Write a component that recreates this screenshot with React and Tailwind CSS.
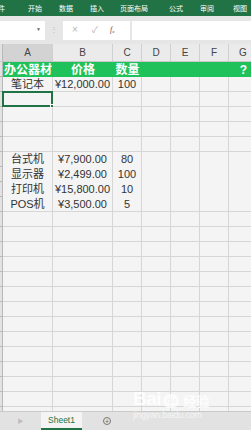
import React from 'react';

const cols = ['A', 'B', 'C', 'D', 'E', 'F', 'G'];
const widths = ['w-[50px]', 'w-[60px]', 'w-[29px]', 'w-[29px]', 'w-[29px]', 'w-[29px]', 'w-[29px]'];

const data = [
  ['台式机', '¥7,900.00', '80'],
  ['显示器', '¥2,499.00', '100'],
  ['打印机', '¥15,800.00', '10'],
  ['POS机', '¥3,500.00', '5'],
];

function Row({ cells = [], noLine = false, selectA = false }) {
  return (
    <div className="flex h-[15px] shrink-0">
      <div className="w-[3px] shrink-0 bg-[#e2e2e2] border-r border-b border-[#b9b9b9]" />
      {cols.map((c, i) => (
        <div
          key={c}
          className={`${widths[i]} shrink-0 relative flex items-center justify-center border-r border-[#d6d6d6] ${noLine ? '' : 'border-b'} text-[#333] text-[11px] leading-none whitespace-nowrap`}
        >
          {cells[i] || ''}
          {selectA && i === 0 && (
            <>
              <div className="absolute -left-px -top-px -right-px -bottom-px border-2 border-[#217346]" />
              <div className="absolute -right-[2px] -bottom-[2px] w-[4px] h-[4px] bg-[#217346] border border-white" />
            </>
          )}
        </div>
      ))}
    </div>
  );
}

export default function App() {
  const font = { fontFamily: '"Liberation Sans", "Noto Sans CJK SC", sans-serif' };
  return (
    <div className="w-[251px] h-[430px] overflow-hidden flex flex-col bg-[#f4f4f4] relative" style={font}>
      {/* ribbon tabs */}
      <div className="h-[16px] shrink-0 bg-[#217346] flex items-center text-white text-[7px] leading-none whitespace-nowrap">
        <span className="-ml-[9px]">文件</span>
        <span className="ml-[23px]">开始</span>
        <span className="ml-[17px]">数据</span>
        <span className="ml-[17px]">插入</span>
        <span className="ml-[16px]">页面布局</span>
        <span className="ml-[21px]">公式</span>
        <span className="ml-[17px]">审阅</span>
        <span className="ml-[19px]">视图</span>
      </div>

      {/* formula bar */}
      <div className="h-[28px] shrink-0 bg-[#e6e6e6] flex items-center">
        <div className="w-[45px] h-[19px] bg-white flex items-center justify-end pr-[4px]">
          <span className="text-[#666] text-[5px]">▼</span>
        </div>
        <div className="w-[18px] flex justify-center text-[#b8b8b8] text-[8px]">⋮</div>
        <div className="w-[67px] h-[19px] bg-white flex items-center text-[#b5b5b5]">
          <span className="ml-[9px] text-[10px] leading-none">×</span>
          <span className="ml-[14px] text-[9px] leading-none">✓</span>
          <span className="ml-[12px] text-[#555] text-[8px] italic leading-none" style={{ fontFamily: '"Liberation Serif", serif' }}>f<sub className="text-[5px]">x</sub></span>
        </div>
        <div className="flex-1 ml-[2px] h-[19px] bg-white" />
      </div>

      {/* column headers */}
      <div className="flex h-[18px] shrink-0 bg-[#ebebeb] border-b border-[#c8c8c8]">
        <div className="w-[3px] shrink-0 bg-[#e2e2e2] border-r border-[#b9b9b9]" />
        {cols.map((c, i) => (
          <div
            key={c}
            className={`${widths[i]} shrink-0 flex items-center justify-center border-r border-[#d0d0d0] text-[#444] text-[10px] ${i === 0 ? 'bg-[#d3d3d3]' : ''}`}
          >
            {c}
          </div>
        ))}
      </div>

      {/* row 1: green header */}
      <div className="flex h-[15px] shrink-0">
        <div className="w-[3px] shrink-0 bg-[#e2e2e2] border-r border-b border-[#b9b9b9]" />
        <div className="flex-1 flex bg-[#1ec15a] text-white font-bold text-[12px] leading-none whitespace-nowrap">
          <div className="w-[50px] flex items-center justify-center">办公器材</div>
          <div className="w-[60px] flex items-center justify-center">价格</div>
          <div className="w-[29px] flex items-center justify-center">数量</div>
          <div className="w-[87px]" />
          <div className="w-[29px] flex items-center justify-center">?</div>
        </div>
      </div>

      <Row cells={['笔记本', '¥12,000.00', '100']} />
      <Row selectA />
      <Row />
      <Row />
      <Row />
      {data.map((d, i) => (
        <Row key={i} cells={d} noLine={i < 3} />
      ))}

      <div className="flex-1 overflow-hidden flex flex-col">
        {Array.from({ length: 16 }).map((_, i) => (
          <Row key={i} />
        ))}
      </div>

      {/* sheet tabs */}
      <div className="h-[19px] shrink-0 bg-[#e2e2e2] border-t border-[#c9c9c9] flex items-stretch">
        <div className="w-[41px] flex items-center justify-center text-[#bdbdbd] text-[6px]">▶</div>
        <div className="w-[41px] bg-[#f4f4f4] border-b-2 border-[#217346] flex items-center justify-center text-[#217346] text-[8.5px]">
          Sheet1
        </div>
        <div className="w-[50px] flex items-center justify-center">
          <div className="w-[8px] h-[8px] rounded-full border border-[#777] flex items-center justify-center text-[#666] text-[7px] leading-none">+</div>
        </div>
      </div>

      {/* watermark */}
      <div className="absolute left-[133px] top-[389px] text-white/80 pointer-events-none leading-none">
        <div className="flex items-end gap-[2px]">
          <span className="text-[19px] font-bold tracking-tight">Bai</span>
          <span className="w-[16px] h-[14px] rounded-full bg-white/70 text-[#f4f4f4] text-[8px] font-bold flex items-center justify-center">du</span>
          <span className="text-[13px] font-bold ml-[2px]">经验</span>
        </div>
        <div className="text-[9px] mt-[3px] text-white/70 tracking-tight">jingyan.baidu.com</div>
      </div>
    </div>
  );
}
